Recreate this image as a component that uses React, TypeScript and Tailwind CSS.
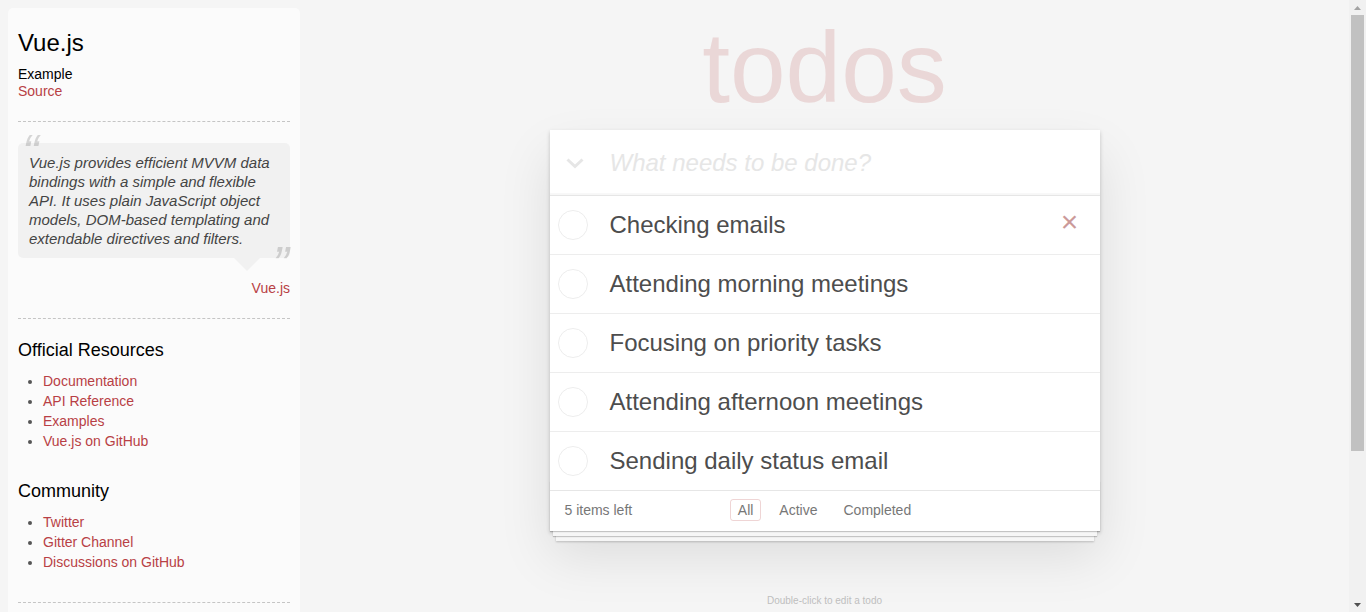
const todos = [
  "Checking emails",
  "Attending morning meetings",
  "Focusing on priority tasks",
  "Attending afternoon meetings",
  "Sending daily status email",
];

const resources = ["Documentation", "API Reference", "Examples", "Vue.js on GitHub"];
const community = ["Twitter", "Gitter Channel", "Discussions on GitHub"];

function Sidebar() {
  return (
    <aside className="mt-[8px] ml-[8px] w-[292px] shrink-0 self-start rounded-[5px] bg-white/60 p-[10px] text-black">
      <h3 className="mt-[10px] text-[24px] leading-[29px]">Vue.js</h3>
      <h5 className="mt-[9px] text-[14px] leading-[17px]">Example</h5>
      <a className="block text-[14px] leading-[17px] text-[#b83f45]">Source</a>

      <hr className="mt-[21px] border-t border-dashed border-[#c5c5c5]" />

      <blockquote className="relative mt-[21px] rounded-[5px] bg-black/[0.04] px-[11px] py-[10px]">
        <span className="absolute left-[4px] top-[-15px] text-[50px] italic leading-none text-black/15">
          &ldquo;
        </span>
        <p className="text-[15px] italic leading-[19px] text-[#444]">
          Vue.js provides efficient MVVM data bindings with a simple and flexible API. It uses plain
          JavaScript object models, DOM-based templating and extendable directives and filters.
        </p>
        <span className="absolute bottom-[-32px] right-[1px] text-[50px] italic leading-none text-black/15">
          &rdquo;
        </span>
        <div className="absolute right-[30px] top-full h-0 w-0 border-[13px] border-transparent border-t-black/[0.04]" />
      </blockquote>
      <div className="mt-[20px] text-right text-[14px] leading-[20px]">
        <a className="text-[#b83f45]">Vue.js</a>
      </div>

      <hr className="mt-[20px] border-t border-dashed border-[#c5c5c5]" />

      <h4 className="mt-[20px] text-[18px] leading-[22px]">Official Resources</h4>
      <ul className="mt-[10px] list-disc pl-[25px] text-[14px] leading-[20px] text-[#555]">
        {resources.map((r) => (
          <li key={r}>
            <a className="text-[#b83f45]">{r}</a>
          </li>
        ))}
      </ul>

      <h4 className="mt-[29px] text-[18px] leading-[22px]">Community</h4>
      <ul className="mt-[10px] list-disc pl-[25px] text-[14px] leading-[20px] text-[#555]">
        {community.map((r) => (
          <li key={r}>
            <a className="text-[#b83f45]">{r}</a>
          </li>
        ))}
      </ul>

      <hr className="mt-[30px] border-t border-dashed border-[#c5c5c5]" />
      <p className="mt-[20px] text-[14px] italic leading-[20px] text-[#555]">
        If you have other helpful links to share, or find any of the links above no longer work,
        please <a className="text-[#b83f45]">let us know</a>.
      </p>
    </aside>
  );
}

function Circle() {
  return (
    <svg width="30" height="30" viewBox="0 0 30 30" className="ml-[8px]">
      <circle cx="15" cy="15" r="14.5" fill="none" stroke="#ededed" strokeWidth="1" />
    </svg>
  );
}

function TodoApp() {
  return (
    <section className="relative mt-[13px] bg-white shadow-[0_2px_4px_0_rgba(0,0,0,0.2),0_25px_50px_0_rgba(0,0,0,0.1)]">
      <header className="flex h-[65px] items-center shadow-[inset_0_-2px_1px_rgba(0,0,0,0.03)]">
        <div className="flex w-[60px] items-center pl-[16px] pt-[2px]">
          <svg width="18" height="11" viewBox="0 0 18 11">
            <path d="M1.5 1.5 L9 8.5 L16.5 1.5" fill="none" stroke="#e6e6e6" strokeWidth="3" />
          </svg>
        </div>
        <input
          className="h-full flex-1 bg-transparent pr-[16px] text-[24px] text-[#4d4d4d] outline-none placeholder:italic placeholder:text-[#e6e6e6]"
          placeholder="What needs to be done?"
        />
      </header>

      <ul className="border-t border-[#e6e6e6]">
        {todos.map((t, i) => (
          <li
            key={t}
            className="flex h-[59px] items-center border-b border-[#ededed] last:h-[58px] last:border-b-0"
          >
            <div className="flex w-[60px] items-center">
              <Circle />
            </div>
            <label className="flex-1 text-[24px] leading-[1.2] text-[#4d4d4d]">{t}</label>
            {i === 0 && (
              <button className="mb-[6px] mr-[10px] flex h-[40px] w-[40px] items-center justify-center text-[30px] text-[#cc9a9a]">
                ×
              </button>
            )}
          </li>
        ))}
      </ul>

      <footer className="relative grid h-[41px] grid-cols-[1fr_auto_1fr] items-center border-t border-[#e6e6e6] px-[15px] text-[14px] text-[#777]">
        <div className="pointer-events-none absolute inset-x-0 bottom-0 h-[50px] overflow-hidden shadow-[0_1px_1px_rgba(0,0,0,0.2),0_8px_0_-3px_#f6f6f6,0_9px_1px_-3px_rgba(0,0,0,0.2),0_16px_0_-6px_#f6f6f6,0_17px_2px_-6px_rgba(0,0,0,0.2)]" />
        <span className="relative">5 items left</span>
        <ul className="relative -mt-[2px] flex gap-[4px]">
          <li>
            <a className="m-[3px] block rounded-[3px] border border-[rgba(175,47,47,0.2)] px-[7px] py-[3px] leading-[14px]">
              All
            </a>
          </li>
          <li>
            <a className="m-[3px] block rounded-[3px] border border-transparent px-[7px] py-[3px] leading-[14px]">
              Active
            </a>
          </li>
          <li>
            <a className="m-[3px] block rounded-[3px] border border-transparent px-[7px] py-[3px] leading-[14px]">
              Completed
            </a>
          </li>
        </ul>
        <span />
      </footer>
    </section>
  );
}

function Scrollbar() {
  return (
    <div className="flex h-full w-[17px] shrink-0 flex-col bg-[#f1f1f1]">
      <div className="flex h-[15px] items-center justify-center">
        <svg width="7" height="4" viewBox="0 0 7 4">
          <path d="M3.5 0 L7 4 L0 4 Z" fill="#a3a3a3" />
        </svg>
      </div>
      <div className="mx-[2px] h-[436px] bg-[#c1c1c1]" />
      <div className="flex-1" />
      <div className="flex h-[15px] items-center justify-center">
        <svg width="7" height="4" viewBox="0 0 7 4">
          <path d="M0 0 L7 0 L3.5 4 Z" fill="#505050" />
        </svg>
      </div>
    </div>
  );
}

export default function App() {
  return (
    <div className="flex h-screen overflow-hidden bg-[#f5f5f5] font-['Liberation_Sans',Arial,sans-serif] text-[14px] leading-[1.4em]">
      <div className="flex min-h-[811px] flex-1">
        <Sidebar />
        <main className="flex flex-1 justify-center">
          <div className="w-[550px]">
            <h1 className="mt-[17px] text-center text-[100px] leading-[100px] text-[rgba(175,47,47,0.15)]">
              todos
            </h1>
            <TodoApp />
            <div className="mt-[65px] pb-[20px] text-center text-[10px] leading-none text-[#bfbfbf]">
              <p>Double-click to edit a todo</p>
              <p className="mt-[10px]">Written by Evan You</p>
              <p className="mt-[10px]">Part of TodoMVC</p>
            </div>
          </div>
        </main>
      </div>
      <Scrollbar />
    </div>
  );
}
